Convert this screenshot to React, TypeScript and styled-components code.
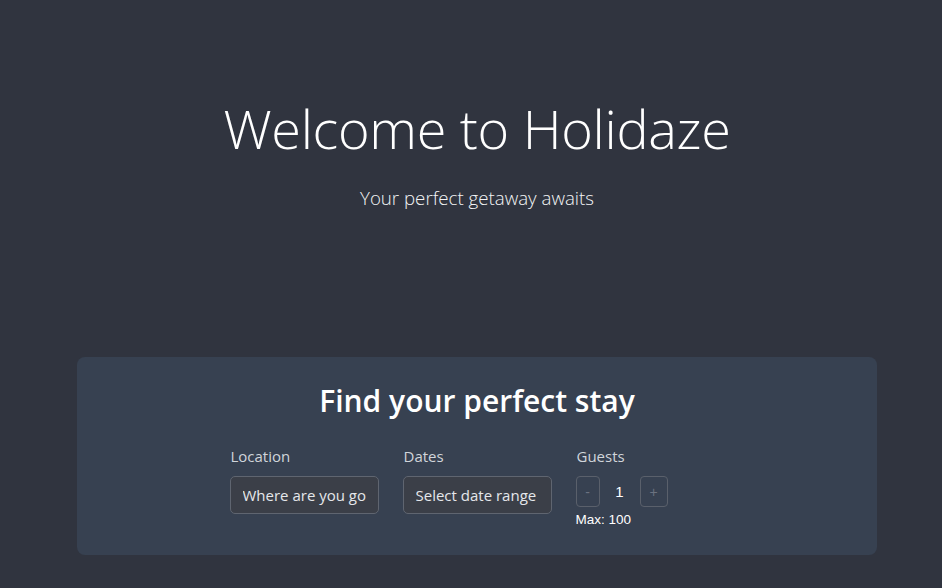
import styled, { createGlobalStyle } from 'styled-components';

/* -------- Global -------- */
const GlobalStyle = createGlobalStyle`
  html, body {
    margin: 0;
    padding: 0;
    background-color: #30343f;
  }
  body {
    font-family: "Open Sans", "Noto Sans", sans-serif;
    color: #FFFFFF;
  }
  * {
    box-sizing: border-box;
  }
`;

/* -------- Styled Components -------- */
const Page = styled.main`
  min-height: 588px;
  background-color: #30343f;
  display: flex;
  flex-direction: column;
  align-items: center;
  padding-left: 12px;
`;

const Hero = styled.section`
  display: flex;
  flex-direction: column;
  align-items: center;
  padding-top: 94px;
  height: 357px;
`;

const HeroTitle = styled.h1`
  margin: 0;
  font-size: 54px;
  line-height: 68px;
  font-weight: 300;
  letter-spacing: -0.3px;
  color: #FFFFFF;
`;

const HeroSubtitle = styled.p`
  margin: 22px 0 0 0;
  font-size: 18.7px;
  line-height: 28px;
  font-weight: 300;
  color: #F3F4F6;
`;

const SearchCard = styled.section`
  width: 800px;
  background-color: #374151;
  border-radius: 8px;
  padding: 26px 0 27px 0;
  display: flex;
  flex-direction: column;
  align-items: center;
`;

const CardTitle = styled.h2`
  margin: 0;
  font-size: 30px;
  line-height: 36px;
  font-weight: 600;
  color: #FFFFFF;
`;

const FieldGrid = styled.div`
  display: grid;
  grid-template-columns: repeat(3, 149px);
  column-gap: 24px;
  margin-top: 27px;
`;

const Field = styled.div`
  display: flex;
  flex-direction: column;
`;

const FieldLabel = styled.label`
  font-size: 15px;
  line-height: 20px;
  color: #D1D5DB;
  margin-bottom: 10px;
  padding-left: 1px;
`;

const TextInput = styled.input`
  width: 149px;
  height: 38px;
  padding: 0 12px;
  border: 1px solid #5F6570;
  border-radius: 5px;
  background-color: #3B3F48;
  color: #FFFFFF;
  font-family: "Open Sans", "Noto Sans", sans-serif;
  font-size: 15px;
  outline: none;
  &::placeholder {
    color: #E5E7EB;
    opacity: 1;
  }
`;

const Stepper = styled.div`
  display: flex;
  align-items: center;
  height: 31px;
`;

const StepButton = styled.button<{ wide?: boolean }>`
  width: ${props => props.wide ? '28px' : '24px'};
  height: 31px;
  padding: 0;
  background: transparent;
  border: 1px solid #5A606B;
  border-radius: 4px;
  color: #6B7280;
  font-family: "Liberation Sans", Arial, sans-serif;
  font-size: 14px;
  cursor: pointer;
`;

const Count = styled.span`
  width: 40px;
  text-align: center;
  font-family: "Liberation Sans", Arial, sans-serif;
  font-size: 15px;
  color: #FFFFFF;
`;

const MaxNote = styled.span`
  margin-top: 5px;
  font-family: "Liberation Sans", Arial, sans-serif;
  font-size: 13.5px;
  line-height: 16px;
  color: #FFFFFF;
`;

function App() {
  return (
    <>
      <GlobalStyle />
      <Page>
        <Hero>
          <HeroTitle>Welcome to Holidaze</HeroTitle>
          <HeroSubtitle>Your perfect getaway awaits</HeroSubtitle>
        </Hero>
        <SearchCard>
          <CardTitle>Find your perfect stay</CardTitle>
          <FieldGrid>
            <Field>
              <FieldLabel>Location</FieldLabel>
              <TextInput placeholder="Where are you going?" />
            </Field>
            <Field>
              <FieldLabel>Dates</FieldLabel>
              <TextInput placeholder="Select date range" readOnly />
            </Field>
            <Field>
              <FieldLabel>Guests</FieldLabel>
              <Stepper>
                <StepButton>-</StepButton>
                <Count>1</Count>
                <StepButton wide>+</StepButton>
              </Stepper>
              <MaxNote>Max: 100</MaxNote>
            </Field>
          </FieldGrid>
        </SearchCard>
      </Page>
    </>
  );
}

export default App;
